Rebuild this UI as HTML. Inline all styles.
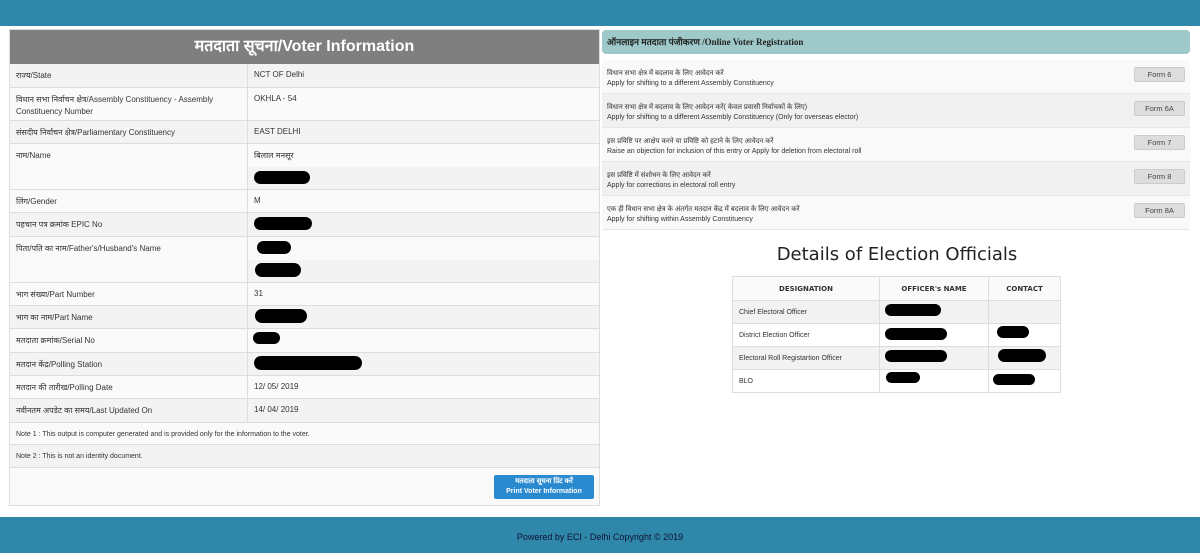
<!DOCTYPE html>
<html><head><meta charset="utf-8"><style>
*{margin:0;padding:0;box-sizing:border-box}
body{width:1200px;height:553px;background:#fff;font-family:"Liberation Sans","Noto Sans CJK SC",sans-serif;font-size:8px;color:#333;position:relative;overflow:hidden}
.top{position:absolute;left:0;top:0;width:1200px;height:26px;background:#2f87a9}
.foot{position:absolute;left:0;top:517px;width:1200px;height:36px;background:#2f87a9;color:#113;font-size:9px;text-align:center;line-height:40px}
.lp{position:absolute;left:9px;top:29px;width:591px;height:477px;border:1px solid #ddd;background:#fafafa}
.hdr{height:34px;background:#7f7f7f;color:#fff;font-weight:bold;font-size:16px;text-align:center;line-height:34px}
.r{position:absolute;left:0;width:589px;border-bottom:1px solid #ddd}
.r .a{position:absolute;left:6px;top:6px;width:230px;line-height:12px}
.r .b{position:absolute;left:244px;top:6px}
.sep{position:absolute;left:237px;top:34px;width:1px;height:359px;background:#ddd}
.blob{position:absolute;background:#000;border-radius:8px}
.btn{position:absolute;left:484px;top:445px;width:100px;height:24px;background:#2a8ad0;border-radius:2px;color:#fff;font-size:7px;font-weight:bold;text-align:center;line-height:10px;padding-top:2px}
.rh{position:absolute;left:602px;top:30px;width:588px;height:24px;background:#9fc9c9;border-radius:4px;font-family:"Liberation Serif","Noto Serif CJK SC",serif;font-weight:bold;font-size:9px;line-height:24px;padding-left:5px;color:#222}
.fr{position:absolute;left:602px;width:588px;height:34px;border-bottom:1px solid #e8e8e8}
.fr .t{position:absolute;left:5px;top:9px;font-size:7px;line-height:10px;color:#333}
.fr .f{position:absolute;right:5px;top:7px;width:51px;height:15px;background:#ddd;border:1px solid #ccc;border-radius:2px;font-size:7.5px;text-align:center;line-height:13px;color:#444}
h2{position:absolute;left:732px;width:330px;top:244px;text-align:center;font-weight:normal;font-size:18px;color:#222;font-family:"DejaVu Sans",sans-serif}
table{position:absolute;left:732px;top:276px;width:329px;border-collapse:collapse;font-size:7px}
td,th{border:1px solid #ddd;height:23px;padding-left:6px;position:relative}
th{text-align:center;font-family:"DejaVu Sans",sans-serif;font-size:7px;background:#fafafa;height:24px;padding:0}
tr:nth-child(even) td{background:#f2f2f2}
</style></head><body>
<div class="top"></div>
<div class="lp">
<div class="hdr">मतदाता सूचना/Voter Information</div>
<div class="r" style="top:34px;height:24px;background:#f3f3f3"><div class="a">राज्य/State</div><div class="b">NCT OF Delhi</div></div>
<div class="r" style="top:58px;height:33px"><div class="a">विधान सभा निर्वाचन क्षेत्र/Assembly Constituency - Assembly Constituency Number</div><div class="b">OKHLA - 54</div></div>
<div class="r" style="top:91px;height:23px;background:#f3f3f3"><div class="a">संसदीय निर्वाचन क्षेत्र/Parliamentary Constituency</div><div class="b">EAST DELHI</div></div>
<div class="r" style="top:114px;height:46px"><div class="a">नाम/Name</div><div class="b">बिलाल मनसूर</div></div>
<div class="r" style="top:137px;height:23px;left:238px;width:351px;background:#f3f3f3"></div>
<div class="r" style="top:160px;height:23px"><div class="a">लिंग/Gender</div><div class="b">M</div></div>
<div class="r" style="top:183px;height:24px;background:#f3f3f3"><div class="a">पहचान पत्र क्रमांक EPIC No</div></div>
<div class="r" style="top:207px;height:46px"><div class="a">पिता/पति का नाम/Father's/Husband's Name</div></div>
<div class="r" style="top:230px;height:23px;left:238px;width:351px;background:#f3f3f3"></div>
<div class="r" style="top:253px;height:23px"><div class="a">भाग संख्या/Part Number</div><div class="b">31</div></div>
<div class="r" style="top:276px;height:23px;background:#f3f3f3"><div class="a">भाग का नाम/Part Name</div></div>
<div class="r" style="top:299px;height:24px"><div class="a">मतदाता क्रमांक/Serial No</div></div>
<div class="r" style="top:323px;height:23px;background:#f3f3f3"><div class="a">मतदान केंद्र/Polling Station</div></div>
<div class="r" style="top:346px;height:23px"><div class="a">मतदान की तारीख/Polling Date</div><div class="b">12/ 05/ 2019</div></div>
<div class="r" style="top:369px;height:24px;background:#f3f3f3"><div class="a">नवीनतम अपडेट का समय/Last Updated On</div><div class="b">14/ 04/ 2019</div></div>
<div class="r" style="top:393px;height:22px;font-size:7px"><div class="a" style="width:580px">Note 1 : This output is computer generated and is provided only for the information to the voter.</div></div>
<div class="r" style="top:415px;height:23px;background:#f3f3f3;font-size:7px"><div class="a" style="width:580px">Note 2 : This is not an identity document.</div></div>
<div class="sep"></div>
<div class="blob" style="left:244px;top:141px;width:56px;height:13px"></div>
<div class="blob" style="left:244px;top:187px;width:58px;height:13px"></div>
<div class="blob" style="left:247px;top:211px;width:34px;height:13px"></div>
<div class="blob" style="left:245px;top:233px;width:46px;height:14px"></div>
<div class="blob" style="left:245px;top:279px;width:52px;height:14px"></div>
<div class="blob" style="left:243px;top:302px;width:27px;height:12px"></div>
<div class="blob" style="left:244px;top:326px;width:108px;height:14px"></div>
<div class="btn">मतदाता सूचना प्रिंट करें<br>Print Voter Information</div>
</div>
<div class="rh">ऑनलाइन मतदाता पंजीकरण /Online Voter Registration</div>
<div class="fr" style="top:60px;background:#f9f9f9"><div class="t">विधान सभा क्षेत्र में बदलाव के लिए आवेदन करें<br>Apply for shifting to a different Assembly Constituency</div><div class="f">Form 6</div></div>
<div class="fr" style="top:94px;background:#f1f1f1"><div class="t">विधान सभा क्षेत्र में बदलाव के लिए आवेदन करें( केवल प्रवासी निर्वाचकों के लिए)<br>Apply for shifting to a different Assembly Constituency (Only for overseas elector)</div><div class="f">Form 6A</div></div>
<div class="fr" style="top:128px;background:#f9f9f9"><div class="t">इस प्रविष्टि पर आक्षेप करने या प्रविष्टि को हटाने के लिए आवेदन करें<br>Raise an objection for inclusion of this entry or Apply for deletion from electoral roll</div><div class="f">Form 7</div></div>
<div class="fr" style="top:162px;background:#f1f1f1"><div class="t">इस प्रविष्टि में संशोधन के लिए आवेदन करें<br>Apply for corrections in electoral roll entry</div><div class="f">Form 8</div></div>
<div class="fr" style="top:196px;background:#f9f9f9"><div class="t">एक ही विधान सभा क्षेत्र के अंतर्गत मतदान केंद्र में बदलाव के लिए आवेदन करें<br>Apply for shifting within Assembly Constituency</div><div class="f">Form 8A</div></div>
<h2>Details of Election Officials</h2>
<table>
<tr><th style="width:147px">DESIGNATION</th><th style="width:109px">OFFICER's NAME</th><th>CONTACT</th></tr>
<tr><td>Chief Electoral Officer</td><td></td><td></td></tr>
<tr><td>District Election Officer</td><td></td><td></td></tr>
<tr><td>Electoral Roll Registartion Officer</td><td></td><td></td></tr>
<tr><td>BLO</td><td></td><td></td></tr>
</table>
<div class="blob" style="left:885px;top:304px;width:56px;height:12px"></div>
<div class="blob" style="left:885px;top:328px;width:62px;height:12px"></div>
<div class="blob" style="left:997px;top:326px;width:32px;height:12px"></div>
<div class="blob" style="left:885px;top:350px;width:62px;height:12px"></div>
<div class="blob" style="left:998px;top:349px;width:48px;height:13px"></div>
<div class="blob" style="left:886px;top:372px;width:34px;height:11px"></div>
<div class="blob" style="left:993px;top:374px;width:42px;height:11px"></div>
<div class="foot">Powered by ECI - Delhi Copyright © 2019</div>
</body></html>
